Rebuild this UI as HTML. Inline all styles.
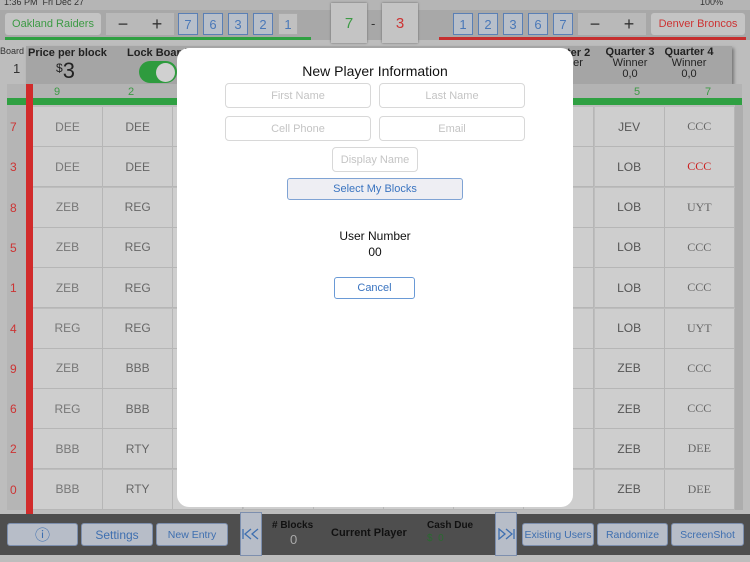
<!DOCTYPE html>
<html><head><meta charset="utf-8"><style>
*{margin:0;padding:0;box-sizing:border-box}
body{width:750px;height:562px;overflow:hidden;background:#bdbdbd;font-family:"Liberation Sans",sans-serif;position:relative}
.a{position:absolute}
.c{display:flex;align-items:center;justify-content:center}
.cell{position:absolute;width:70px;height:40px;background:#cecece;border-right:1px solid #b6b6b6;border-bottom:1px solid #b6b6b6;display:flex;align-items:center;justify-content:center;font-size:12px;color:#666}
.nb{position:absolute;top:13px;width:20px;height:22px;background:#b8bfca;border:1.5px solid #5a7fb5;color:#4a78b8;font-size:13px;display:flex;align-items:center;justify-content:center}
.btn{position:absolute;top:523px;height:23px;background:#b7bdc8;border:1.5px solid #7d8fae;border-radius:3px;color:#3e6fb0;font-size:10.5px;display:flex;align-items:center;justify-content:center;white-space:nowrap}
.in{position:absolute;height:25px;border:1px solid #d8d8d8;border-radius:4px;color:#c4c4c4;font-size:11px;display:flex;align-items:center;justify-content:center;background:#fff}
</style></head><body>
<div class="a" style="left:0;top:0;width:750px;height:10px;background:#b5b5b5"></div>
<div class="a" style="left:4px;top:-3px;font-size:9px;color:#333">1:36 PM &nbsp;Fri Dec 27</div>
<div class="a" style="left:700px;top:-3px;font-size:9px;color:#333">100%</div>
<div class="a" style="left:0;top:10px;width:750px;height:30px;background:#a8a8a8"></div>
<div class="a c" style="left:5px;top:13px;width:96px;height:22px;background:#c4c4c4;border-radius:3px;color:#3c9a44;font-size:11px">Oakland Raiders</div>
<div class="a c" style="left:106px;top:13px;width:68px;height:22px;background:#b9b9b9;font-size:18px;color:#333;justify-content:space-around">−<span>+</span></div>
<div class="nb" style="left:178px">7</div><div class="nb" style="left:203px">6</div><div class="nb" style="left:228px">3</div><div class="nb" style="left:253px">2</div><div class="nb" style="left:278px;background:#c0c0c0;border-color:#aaa">1</div>
<div class="a" style="left:5px;top:37px;width:306px;height:3px;background:#2fa042"></div>
<div class="a c" style="left:331px;top:3px;width:36px;height:40px;background:#c4c4c4;color:#3c9a44;font-size:15px;box-shadow:0 0 2px #666">7</div>
<div class="a" style="left:371px;top:16px;font-size:13px;color:#333">-</div>
<div class="a c" style="left:382px;top:3px;width:36px;height:40px;background:#c4c4c4;color:#c33;font-size:15px;box-shadow:0 0 2px #666">3</div>
<div class="nb" style="left:453px">1</div><div class="nb" style="left:478px">2</div><div class="nb" style="left:503px">3</div><div class="nb" style="left:528px">6</div><div class="nb" style="left:553px">7</div>
<div class="a c" style="left:578px;top:13px;width:68px;height:22px;background:#b9b9b9;font-size:18px;color:#333;justify-content:space-around">−<span>+</span></div>
<div class="a c" style="left:651px;top:13px;width:94px;height:22px;background:#c4c4c4;border-radius:3px;color:#c33;font-size:11px">Denver Broncos</div>
<div class="a" style="left:439px;top:37px;width:307px;height:3px;background:#c62f2f"></div>
<div class="a" style="left:0;top:46px;font-size:9px;color:#333">Board</div>
<div class="a" style="left:13px;top:61px;font-size:13px;color:#333">1</div>
<div class="a" style="left:26px;top:46px;width:706px;height:38px;background:#a5a5a5;box-shadow:2px 2px 3px #777"></div>
<div class="a" style="left:28px;top:47px;font-size:11px;font-weight:bold;color:#222">Price per block</div>
<div class="a" style="left:56px;top:58px;font-size:22px;color:#222"><span style="font-size:12px;vertical-align:6px">$</span>3</div>
<div class="a" style="left:127px;top:47px;font-size:11px;font-weight:bold;color:#222">Lock Board</div>
<div class="a" style="left:139px;top:61px;width:38px;height:22px;border-radius:11px;background:#2e9b3e"></div>
<div class="a" style="left:156px;top:63px;width:19px;height:19px;border-radius:50%;background:#d0d0d0"></div>
<div class="a" style="left:567px;top:47px;font-size:11px;font-weight:bold;color:#222">ter 2</div>
<div class="a" style="left:598px;top:47px;width:64px;text-align:center;font-size:11px;font-weight:bold;color:#222;line-height:11px">Quarter 3<br><span style="font-weight:normal">Winner<br>0,0</span></div>
<div class="a" style="left:660px;top:47px;width:58px;text-align:center;font-size:11px;font-weight:bold;color:#222;line-height:11px">Quarter 4<br><span style="font-weight:normal">Winner<br>0,0</span></div>
<div class="a" style="left:567px;top:58px;font-size:11px;color:#222;line-height:11px">ner<br>0</div>
<div class="a" style="left:7px;top:84px;width:735px;height:14px;background:#b3b3b3"></div>
<div class="a" style="left:7px;top:98px;width:735px;height:7px;background:#2fa042"></div>
<div class="a" style="left:54px;top:86px;font-size:11px;color:#3c9a44">9</div>
<div class="a" style="left:128px;top:86px;font-size:11px;color:#3c9a44">2</div>
<div class="a" style="left:634px;top:86px;font-size:11px;color:#3c9a44">5</div>
<div class="a" style="left:705px;top:86px;font-size:11px;color:#3c9a44">7</div>
<div class="a" style="left:7px;top:105px;width:20px;height:405px;background:#b5b5b5"></div>
<div class="a" style="left:26px;top:84px;width:7px;height:430px;background:#d12b2b"></div>
<div class="a" style="left:735px;top:105px;width:8px;height:405px;background:#adadad"></div>
<div id="g"></div>
<div class="a" style="left:0;top:514px;width:750px;height:41px;background:#4e4e4e"></div>
<div class="btn" style="left:7px;width:71px;font-size:15px">ⓘ</div>
<div class="btn" style="left:81px;width:72px;font-size:12px">Settings</div>
<div class="btn" style="left:156px;width:72px">New Entry</div>
<div class="a c" style="left:240px;top:512px;width:22px;height:44px;background:#b7bdc8;border:1.5px solid #7d8fae"><svg width="18" height="12" viewBox="0 0 18 12"><path d="M1 1V11M9 1L3 6L9 11M16 1L10 6L16 11" stroke="#3e6fb0" stroke-width="1.3" fill="none"/></svg></div>
<div class="a" style="left:272px;top:520px;font-size:10px;font-weight:bold;color:#111">#&nbsp;Blocks</div>
<div class="a" style="left:290px;top:532px;font-size:13px;color:#aaa">0</div>
<div class="a" style="left:331px;top:527px;font-size:11px;font-weight:bold;color:#111">Current Player</div>
<div class="a" style="left:427px;top:520px;font-size:10px;font-weight:bold;color:#111">Cash Due</div>
<div class="a" style="left:427px;top:533px;font-size:10px;color:#2a6a30">$ &nbsp;0</div>
<div class="a c" style="left:495px;top:512px;width:22px;height:44px;background:#b7bdc8;border:1.5px solid #7d8fae"><svg width="18" height="12" viewBox="0 0 18 12"><path d="M2 1L8 6L2 11ZM9 1L15 6L9 11M17 1V11" stroke="#3e6fb0" stroke-width="1.3" fill="none"/></svg></div>
<div class="btn" style="left:522px;width:72px">Existing Users</div>
<div class="btn" style="left:597px;width:71px">Randomize</div>
<div class="btn" style="left:671px;width:73px">ScreenShot</div>
<div class="a" style="left:177px;top:48px;width:396px;height:459px;background:#fff;border-radius:12px"></div>
<div class="a" style="left:177px;top:63px;width:396px;text-align:center;font-size:14px;color:#111">New Player Information</div>
<div class="in" style="left:225px;top:83px;width:146px">First Name</div>
<div class="in" style="left:379px;top:83px;width:146px">Last Name</div>
<div class="in" style="left:225px;top:116px;width:146px">Cell Phone</div>
<div class="in" style="left:379px;top:116px;width:146px">Email</div>
<div class="in" style="left:332px;top:147px;width:86px">Display Name</div>
<div class="a c" style="left:287px;top:178px;width:176px;height:22px;background:#eeeef3;border:1px solid #7fa3d4;border-radius:3px;color:#3a74c0;font-size:11px">Select My Blocks</div>
<div class="a" style="left:177px;top:228px;width:396px;text-align:center;font-size:12px;color:#111;line-height:16px">User Number<br>00</div>
<div class="a c" style="left:334px;top:277px;width:81px;height:22px;border:1px solid #6a9ad6;border-radius:3px;color:#3a74c0;font-size:11px">Cancel</div>
<script>
var rows=["7","3","8","5","1","4","9","6","2","0"];
var c1=["DEE","DEE","ZEB","ZEB","ZEB","REG","ZEB","REG","BBB","BBB"];
var c2=["DEE","DEE","REG","REG","REG","REG","BBB","BBB","RTY","RTY"];
var c9=["JEV","LOB","LOB","LOB","LOB","LOB","ZEB","ZEB","ZEB","ZEB"];
var c10=["CCC","CCC","UYT","CCC","CCC","UYT","CCC","CCC","DEE","DEE"];
var h="";
for(var j=0;j<10;j++){var y=107+j*40.3;
h+='<div class="a" style="left:10px;top:'+(y+13)+'px;font-size:12px;color:#c33">'+rows[j]+'</div>';
for(var i=0;i<10;i++){var x=33+i*70.2;var t="";var st="";
if(i==0){t=c1[j];st="color:#777";}if(i==1)t=c2[j];if(i==8){t=c9[j];st="font-size:12px;color:#555";}
if(i==9){t=c10[j];st="font-family:'Liberation Serif',serif;font-size:12px;color:"+(j==1?"#c22":"#666");}
h+='<div class="cell" style="left:'+x+'px;top:'+y+'px;'+st+'">'+t+'</div>';}}
document.getElementById("g").innerHTML=h;
</script>
</body></html>
